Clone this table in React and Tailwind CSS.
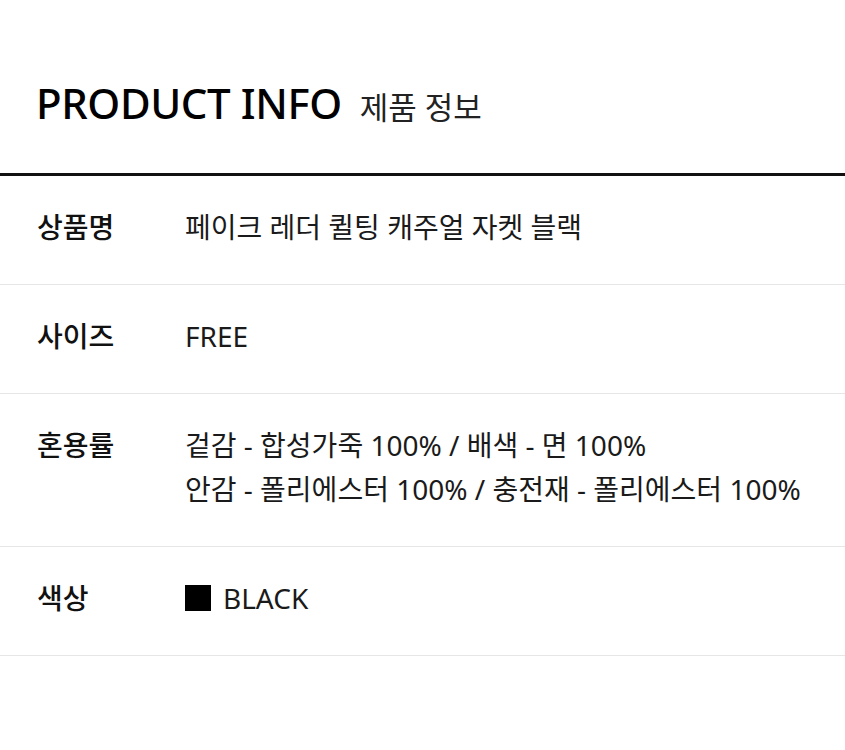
export default function App() {
  const rows = [
    { label: '상품명', value: ['페이크 레더 퀼팅 캐주얼 자켓 블랙'] },
    { label: '사이즈', value: ['FREE'] },
    { label: '혼용률', value: ['겉감 - 합성가죽 100% / 배색 - 면 100%', '안감 - 폴리에스터 100% / 충전재 - 폴리에스터 100%'] },
    { label: '색상', color: true, value: ['BLACK'] },
  ];

  return (
    <div className="w-[845px] h-[750px] bg-white text-[#111] font-['Noto_Sans','Noto_Sans_CJK_KR',sans-serif]">
      <div className="flex items-end gap-[18px] px-[36px] pt-[73px] pb-[40px] border-b-[3px] border-[#111]">
        <h1 className="text-[42px] leading-[60px] font-medium tracking-[-0.4px] text-black">PRODUCT INFO</h1>
        <span className="text-[31px] leading-[52px] text-[#222]">제품 정보</span>
      </div>
      {rows.map(row => (
        <div key={row.label} className="flex px-[37px] pt-[29px] pb-[35px] border-b border-[#e6e6e6]">
          <div className="w-[148px] shrink-0 text-[28px] leading-[44px] font-medium">{row.label}</div>
          <div className="text-[28px] leading-[44px] text-[#1a1a1a]">
            {row.value.map(line => (
              <div key={line} className="flex items-center gap-3">
                {row.color && <span className="w-[26px] h-[26px] bg-black" />}
                {line}
              </div>
            ))}
          </div>
        </div>
      ))}
    </div>
  );
}
